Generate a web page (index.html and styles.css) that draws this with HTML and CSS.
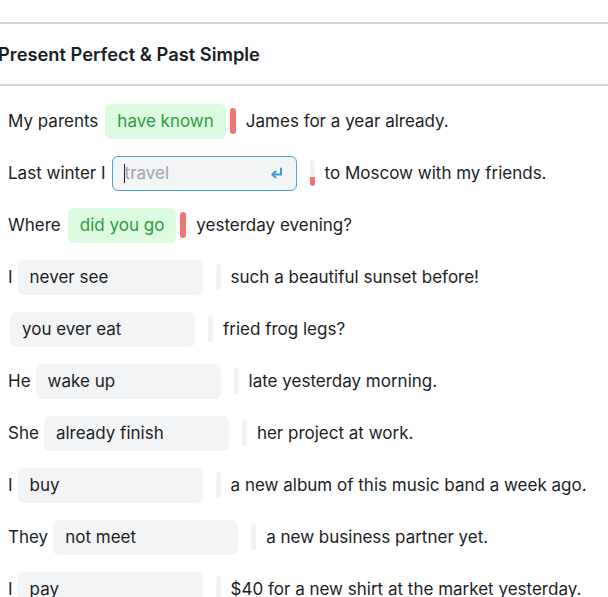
FILE: index.html
```html
<!DOCTYPE html>
<html lang="en">
<head>
<meta charset="utf-8">
<title>Present Perfect &amp; Past Simple</title>
<link rel="stylesheet" href="styles.css">
</head>
<body>
<section class="exercise">
  <header class="head">
    <h1 class="title">Present Perfect &amp; Past Simple</h1>
  </header>
  <div class="rows">
    <div class="row">
      <span class="pre">My parents</span>
      <span class="box ok">have known</span>
      <span class="bar red"></span>
      <span class="post">James for a year already.</span>
    </div>
    <div class="row">
      <span class="pre">Last winter I</span>
      <span class="box input"><span class="caret"></span><span class="ph">travel</span>
        <svg class="enter" width="13" height="12" viewBox="0 0 13 12"><path d="M11 1.5V7.5H3" fill="none" stroke="#3d9bd2" stroke-width="2" stroke-linecap="round"/><path d="M5.5 4.5L2.3 7.5L5.5 10.5" fill="none" stroke="#3d9bd2" stroke-width="2" stroke-linecap="round" stroke-linejoin="round"/></svg>
      </span>
      <span class="bar gray partial"></span>
      <span class="post">to Moscow with my friends.</span>
    </div>
    <div class="row">
      <span class="pre">Where</span>
      <span class="box ok">did you go</span>
      <span class="bar red"></span>
      <span class="post">yesterday evening?</span>
    </div>
    <div class="row">
      <span class="pre">I</span>
      <span class="box empty">never see</span>
      <span class="bar gray"></span>
      <span class="post">such a beautiful sunset before!</span>
    </div>
    <div class="row">
      <span class="pre none"></span>
      <span class="box empty">you ever eat</span>
      <span class="bar gray"></span>
      <span class="post">fried frog legs?</span>
    </div>
    <div class="row">
      <span class="pre">He</span>
      <span class="box empty">wake up</span>
      <span class="bar gray"></span>
      <span class="post">late yesterday morning.</span>
    </div>
    <div class="row">
      <span class="pre">She</span>
      <span class="box empty">already finish</span>
      <span class="bar gray"></span>
      <span class="post">her project at work.</span>
    </div>
    <div class="row">
      <span class="pre">I</span>
      <span class="box empty">buy</span>
      <span class="bar gray"></span>
      <span class="post">a new album of this music band a week ago.</span>
    </div>
    <div class="row">
      <span class="pre">They</span>
      <span class="box empty">not meet</span>
      <span class="bar gray"></span>
      <span class="post">a new business partner yet.</span>
    </div>
    <div class="row">
      <span class="pre">I</span>
      <span class="box empty">pay</span>
      <span class="bar gray"></span>
      <span class="post">$40 for a new shirt at the market yesterday.</span>
    </div>
  </div>
</section>
</body>
</html>
```
FILE: styles.css
```css
html, body {
  margin: 0;
  padding: 0;
  background: #ffffff;
  overflow: hidden;
}
body {
  font-family: Inter, "Noto Sans", sans-serif;
  color: #1b1e25;
  font-size: 17px;
}
.exercise {
  padding-top: 22px;
}
.head {
  border-top: 2px solid #d6d6d6;
  border-bottom: 2px solid #d6d6d6;
  height: 60px;
  display: flex;
  align-items: center;
}
.title {
  margin: 0 0 0 -2px;
  font-size: 18.3px;
  font-weight: 600;
}
.rows {
  padding-top: 9px;
  padding-left: 8px;
}
.row {
  height: 52px;
  display: flex;
  align-items: center;
  white-space: nowrap;
}
.pre {
  margin-right: 5px;
}
.pre.none {
  margin-right: 2px;
}
.box {
  height: 35px;
  box-sizing: border-box;
  border-radius: 6px;
  display: flex;
  align-items: center;
  padding: 0 12px;
}
.box.ok {
  background: #dcfbe0;
  color: #2f9a40;
  margin-left: 2px;
  margin-right: 4px;
}
.box.empty {
  width: 185px;
  background: #f3f4f6;
  margin-right: 13px;
}
.box.input {
  width: 185px;
  background: #f3f4f6;
  border: 1px solid #4ea2d2;
  margin-left: 1px;
  margin-right: 13px;
  padding-left: 11px;
}
.caret {
  width: 1px;
  height: 19px;
  background: #1b1e25;
}
.ph {
  color: #a0a4aa;
  flex: 1;
}
.enter {
  margin-right: 1px;
}
.bar {
  width: 6px;
  height: 26px;
  border-radius: 3px;
  margin-right: 10px;
  overflow: hidden;
  display: flex;
  flex-direction: column;
  justify-content: flex-end;
}
.bar.red {
  background: #f07474;
}
.bar.gray {
  background: #f2f2f3;
  width: 5px;
}
.bar.partial::after {
  content: "";
  display: block;
  height: 9px;
  background: #f07474;
  border-radius: 0 0 3px 3px;
}
```
